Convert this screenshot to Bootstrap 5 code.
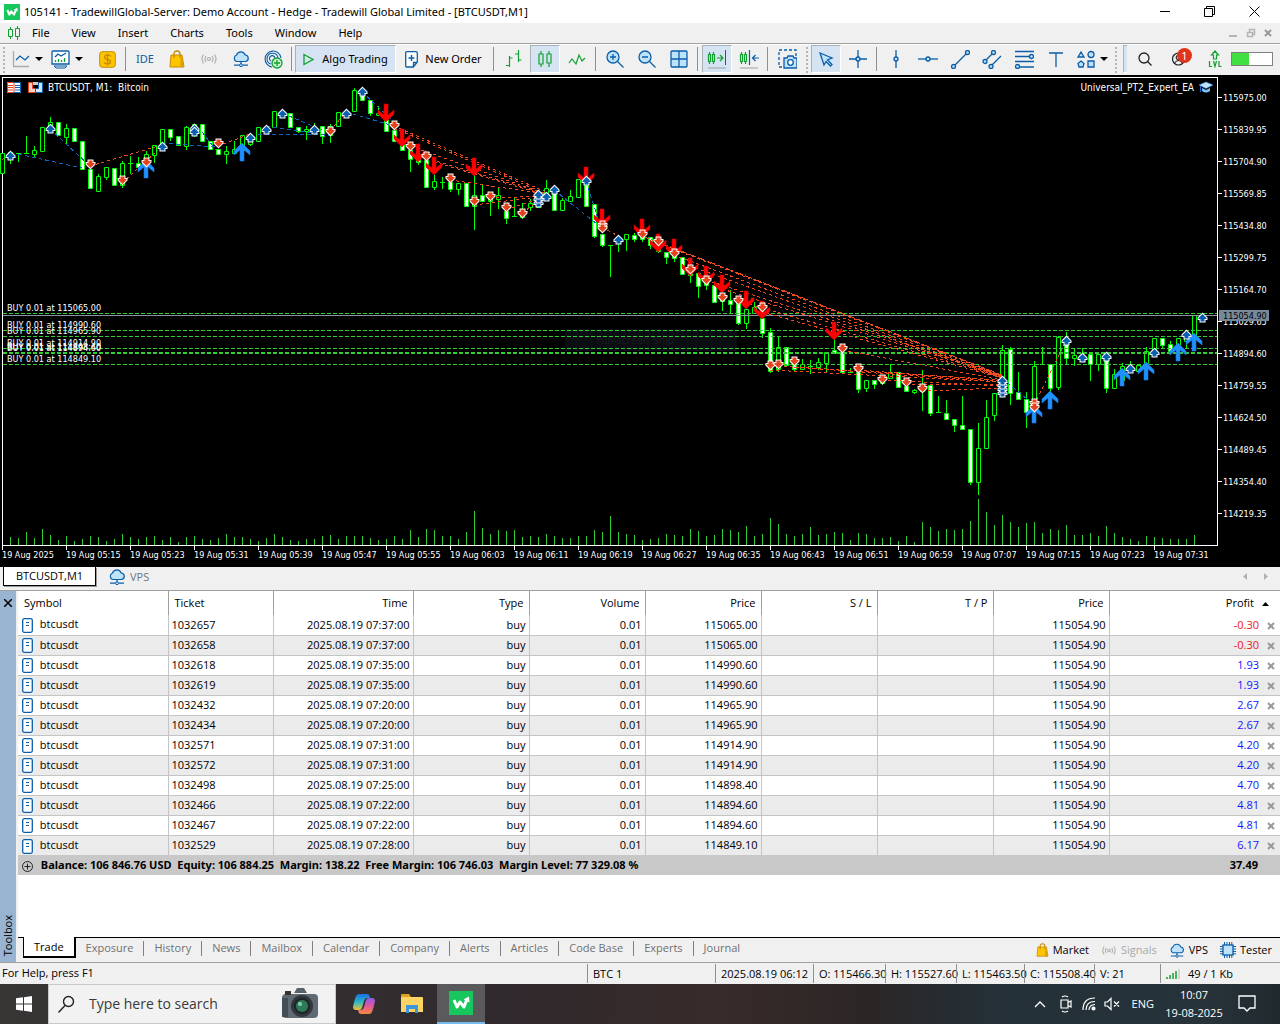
<!DOCTYPE html>
<html lang="en">
<head>
<meta charset="utf-8">
<meta name="viewport" content="width=device-width, initial-scale=1">
<title>105141 - TradewillGlobal-Server: Demo Account</title>
<link href="https://cdn.jsdelivr.net/npm/bootstrap@5.3.0/dist/css/bootstrap.min.css" rel="stylesheet">
<style>
:root{--ui:"Open Sans","Noto Sans",sans-serif;--edge:#a0a0a0;--face:#f0f0f0;--ink:#0a5ea8}
body{font-family:var(--ui);font-size:11px;line-height:16px;color:#000;background:#f0f0f0;min-height:100vh}
button,input{font:inherit;color:inherit}
button{border:0;background:none;padding:0}
a{color:inherit;text-decoration:none}
svg{display:block;flex:none}
.ico{fill:none;stroke:var(--ink);stroke-width:1.3}
.titlebar{height:23px;background:#fff;font-family:"Noto Sans",sans-serif}
.winbtn{width:45px;height:23px;display:flex;justify-content:center;align-items:center}
.winbtn:last-child{margin-right:3px}
.menubar{height:21px;background:var(--face);border-bottom:1px solid var(--edge);font-family:"Noto Sans",sans-serif}
.menubar a{padding:0 11px}
.toolbar{height:31px;background:var(--face);border-top:1px solid #fff;padding-bottom:2px;font-family:"Noto Sans",sans-serif}
.tb{width:32px;display:flex;align-items:center;justify-content:center;flex:none}
.tb-on{background:#d5e3f2;border:1px solid #a8b0b8;border-right-color:#fff;border-bottom-color:#fff}
.narrow{margin:0 1px;width:30px}
.drop{width:40px;gap:5px}
.tb-ide{color:var(--ink)}
.tsep{width:6px;flex:none;background:linear-gradient(#909090,#909090) 2px 2px/1px 24px no-repeat}
.grip{width:7px;flex:none;background:linear-gradient(#f0f0f0 50%,transparent 50%) 0 0/7px 4px,linear-gradient(#b4b4b4,#b4b4b4) 3px 0/2px 100% no-repeat}
.caret{width:0;height:0;border:4px solid transparent;border-top-color:#000;border-bottom:0}
.lvlbar{width:42px;height:14px;border:1px solid #808080;background:linear-gradient(90deg,#40e040 42%,#fff 42%);margin-right:7px}
.note-badge{position:absolute;left:14px;top:-4px;width:15px;height:15px;border-radius:50%;background:#e2331b;color:#fff;line-height:15px;font-size:11px}
.chart{background:#000}
.chart svg{width:100%;height:auto}
.chart text{font-family:"DejaVu Sans Condensed","DejaVu Sans",sans-serif;font-size:9px;fill:#fff}
.chart text.cap{font-size:10px}
.chart-tabs{height:24px;border-bottom:1px solid var(--edge)}
.chart-tabs a{height:19px}
.chart-tab{width:93px;background:#fff;border:1px solid #000;border-top:0;margin-left:3px;display:flex;align-items:center;justify-content:center;box-shadow:1px 1px 0 #999}
.toolbox{flex:1 0 auto}
.spine{width:16px;background:#99b4d1}
.spine span{writing-mode:vertical-rl;transform:rotate(180deg);margin-bottom:6px}
.pane{border-left:2px solid var(--face)}
.deals{width:100%;table-layout:fixed;border-collapse:collapse;background:#fff}
.deals th{font-weight:400;height:24px;padding:0 5px;border-right:1px solid var(--edge);text-align:right}
.deals td{height:20px;padding:0 3px;border-right:1px solid #c4c4c4;border-bottom:1px solid #c4c4c4;text-align:right;line-height:16px;white-space:nowrap}
.deals .lft{text-align:left}
.deals th.lft{padding-left:6px}
.deals tbody tr:nth-child(even){background:#ebebeb}
.deals tbody tr:last-child td{border-bottom:0}
.deals th:last-child,.deals td:last-child{border-right:0}
.deals td:last-child{padding-right:5px}
.deals th:last-child{padding-right:7px}
.deals tfoot td{background:#c8c8c8;border:0;font-weight:700;font-family:"Noto Sans",sans-serif}
.deals tfoot td:last-child{padding-right:22px}
.gain{color:#1414ff}.loss{color:#f01414}
.del{display:inline-block;vertical-align:middle;margin-left:8px}
.box-tabs{height:25px;border-top:1px solid #000;background:var(--face)}
.box-tabs a{color:#707070;padding:0 10px;height:15px;margin-top:3px;line-height:13px}
.box-tabs a+a+a{border-left:1px solid #808080}
.box-tabs a.now{background:#fff;color:#000;border:solid #000;border-width:0 2px 2px 1px;margin:-1px 0 0 5px;height:21px;line-height:20px}
.tools{column-gap:12px}
.statusbar{height:22px;border-top:1px solid var(--edge);background:var(--face)}
.statusbar div{border-left:1px solid #909090;padding-left:5px;line-height:19px;margin:1px 0;white-space:nowrap;flex:none}
.taskbar{height:40px;background:linear-gradient(90deg,#373635,#30292d 40%,#382b29 56%,#2b2626 68%,#243038 78%,#27333a 94%,#20292e);color:#fff}
.task{width:48px;height:40px;display:flex;align-items:center;justify-content:center}
.task-on{background:#5a5a5c;border-bottom:2px solid #76b9ed;margin-left:1px}
.finder{width:288px;height:40px;background:#f2f2f2;border:1px solid #c8c8c8;color:#303030}
.finder input{border:0;outline:0;background:none;font-size:14px;min-width:0;flex:1}
.finder input::placeholder{color:#3a3a3a;opacity:1}
.clock{width:72px;text-align:center;line-height:18px}
</style>
<script src="https://cdn.jsdelivr.net/npm/bootstrap@5.3.0/dist/js/bootstrap.bundle.min.js"></script>
</head>
<body class="d-flex flex-column">
<svg width="0" height="0" class="position-absolute" aria-hidden="true">
<symbol id="logo" viewBox="0 0 24 24"><path d="M0 0h24v24H0z" fill="#17c75d"/><path d="M5 9l3 7 3-5 4 5 3-8" fill="none" stroke="#fff" stroke-width="3" stroke-linejoin="round"/><path d="M14.500 8.500L20 5.500l.5 6z" fill="#fff"/></symbol>
<symbol id="bag" viewBox="0 0 16 18"><path d="M2 5h11l2 12H1z" fill="#fdc500" stroke="#c98a00"/><path d="M5 8V4q0-3 3-3t3 3v4" fill="none" stroke="#c98a00" stroke-width="1.300"/><path d="M12 5l3 12-4 0z" fill="#e0a000"/></symbol>
<symbol id="waves" viewBox="0 0 18 12"><g fill="none" stroke="#b0b0b0" stroke-width="1.200"><circle cx="9" cy="6" r="1.500"/><path d="M6 3q-2 3 0 6M12 3q2 3 0 6M3.500 1.500q-3 4.500 0 9M14.500 1.500q3 4.500 0 9"/></g></symbol>
<symbol id="cloud" viewBox="0 0 18 16"><path d="M4.500 10.500a3.500 3.500 0 0 1 0-6.500 4.600 4.600 0 0 1 8.700 0 3.300 3.300 0 0 1 .5 6.500z" fill="#bfe2fb" stroke="#0a5ea8" stroke-width="1.200"/><path d="M9 10.500V14M2 14.200h5M11 14.200h5" stroke="#0a5ea8" stroke-width="1.200"/><circle cx="9" cy="14.200" r="1.500" fill="#bfe2fb" stroke="#0a5ea8"/></symbol>
<symbol id="doc" viewBox="0 0 11 15"><rect x=".7" y=".7" width="9.600" height="13.600" rx="1.500" fill="#fff" stroke="#0a5ea8" stroke-width="1.300"/><path d="M4 4.500h3M4 7.500h3" stroke="#0a5ea8"/></symbol>
<symbol id="cross" viewBox="0 0 8 8"><path d="M1 1l6 6M7 1L1 7" stroke="#999" stroke-width="2"/></symbol>
</svg>

<header class="titlebar d-flex align-items-center">
<svg width="16" height="16" class="ms-1 me-1 ps-0"><use href="#logo"/></svg>
<span class="flex-grow-1 text-nowrap">105141 - TradewillGlobal-Server: Demo Account - Hedge - Tradewill Global Limited - [BTCUSDT,M1]</span>
<button class="winbtn" aria-label="Minimize"><svg width="10" height="10"><path d="M0 4.500h10" stroke="#000"/></svg></button>
<button class="winbtn" aria-label="Restore"><svg width="11" height="11" fill="none" stroke="#000"><path d="M.5 2.500h8v8h-8zM2.500 2.500v-2h8v8h-2"/></svg></button>
<button class="winbtn" aria-label="Close"><svg width="11" height="11" stroke="#000"><path d="M.5.5l10 10M10.500.5l-10 10"/></svg></button>
</header>

<nav class="menubar d-flex align-items-center">
<svg width="13" height="14" class="ms-2 me-0" fill="none" stroke="#10a030"><path d="M.5 3.500h4v7h-4zM2.500 1v2.500M2.500 10.500V13M7.500 2.500h4v8h-4zM9.500 0v2.500M9.500 10.500V14"/></svg>
<a href="#">File</a><a href="#">View</a><a href="#">Insert</a><a href="#">Charts</a><a href="#">Tools</a><a href="#">Window</a><a href="#">Help</a>
<div class="ms-auto d-flex gap-2 pe-2 align-items-center">
<svg width="10" height="10"><path d="M1 8h8" stroke="#b4b4b4" stroke-width="2"/></svg>
<svg width="10" height="10" fill="none" stroke="#b4b4b4"><path d="M1.500 4.500h5v4h-5zM3.500 4V1.500h5v5H7" stroke-width="1.500"/></svg>
<svg width="8" height="8"><use href="#cross"/></svg>
</div>
</nav>

<div class="toolbar d-flex align-items-stretch">
<i class="grip"></i>
<button class="tb drop" aria-label="Chart type"><svg class="ico" width="18" height="18"><path d="M1.500 1v15.500H17" stroke="#aaa"/><path d="M4 10l4-4 5 4 4-4" /></svg><i class="caret"></i></button>
<button class="tb drop" aria-label="Indicators"><svg class="ico" width="19" height="19"><path d="M2 1h15q1 0 1 1v12H1V2q0-1 1-1z" fill="#fff"/><path d="M3 16h13l-2 2H5z" stroke-width="1"/><path d="M4 7l3-3 3 2 5-3"/><path d="M4.500 12v-2M7.500 12V9M10.500 12v-2M13.500 12V8" stroke="#10a030"/></svg><i class="caret"></i></button>
<button class="tb ms-1" aria-label="Finance"><svg width="17" height="17"><rect x=".7" y=".7" width="15.600" height="15.600" rx="2.500" fill="#fdc500" stroke="#c98a00"/><path d="M12 5.500q-1-1.500-3.500-1.500T5.500 6q0 2 3 2.500t3 2.500q0 2-3 2t-3.700-1.700M8.500 2.500v12" fill="none" stroke="#c98a00" stroke-width="1.300"/></svg></button>
<i class="tsep"></i>
<button class="tb tb-ide">IDE</button>
<button class="tb" aria-label="Market"><svg width="16" height="18"><use href="#bag"/></svg></button>
<button class="tb" aria-label="Signals"><svg width="18" height="12"><use href="#waves"/></svg></button>
<button class="tb" aria-label="VPS"><svg width="18" height="16"><use href="#cloud"/></svg></button>
<button class="tb" aria-label="Target"><svg class="ico" width="19" height="19"><path d="M8 17A8 8 0 1 1 17 8M7 14A5.500 5.500 0 1 1 14 8M7 11a2.800 2.800 0 1 1 4-3" stroke-width="1.100"/><circle cx="13" cy="13" r="5" fill="#c9f0cf" stroke="#10a030"/><path d="M13 10v6M10 13h6" stroke="#10a030"/></svg></button>
<i class="tsep"></i>
<button class="tb tb-on" style="width:101px;gap:8px"><svg width="11" height="13"><path d="M1 1.500l9 5-9 5z" fill="none" stroke="#10a030" stroke-width="1.300"/></svg>Algo Trading</button>
<button class="tb" style="width:95px;gap:7px"><svg class="ico" width="13" height="17"><path d="M2 .7h9q1.300 0 1.300 1.300v9l-4 5H2q-1.300 0-1.300-1.300V2Q.7.700 2 .7zM8.500 16v-4.500h4" fill="#fff"/><path d="M6.500 4v6M3.500 7h6" stroke-width="1.500"/></svg>New Order</button>
<i class="tsep"></i>
<button class="tb" aria-label="Bars"><svg width="17" height="18" fill="none" stroke="#10a030" stroke-width="1.200"><path d="M4.500 6v11M4.500 8h3M1 15.500h3.500M13.500 0v12M10 4h3.500M13.500 10h3"/></svg></button>
<button class="tb tb-on narrow" aria-label="Candles"><svg width="14" height="18" fill="none" stroke="#10a030" stroke-width="1.200"><path d="M1 4h4v10H1zM3 1v3M3 14v3M9 4h4v9H9zM11 1v3M11 13v4"/></svg></button>
<button class="tb" aria-label="Line"><svg width="18" height="14" fill="none" stroke="#10a030" stroke-width="1.200"><path d="M1 11l3-4 4 5 3-9 3 6 3-3"/></svg></button>
<i class="tsep"></i>
<button class="tb" aria-label="Zoom in"><svg class="ico" width="18" height="18"><circle cx="7" cy="7" r="6" fill="#bfe2fb"/><path d="M11.500 11.500l6 6M7 4v6M4 7h6"/></svg></button>
<button class="tb" aria-label="Zoom out"><svg class="ico" width="18" height="18"><circle cx="7" cy="7" r="6" fill="#bfe2fb"/><path d="M11.500 11.500l6 6M4 7h6"/></svg></button>
<button class="tb" aria-label="Tile"><svg class="ico" width="18" height="18"><rect x="1" y="1" width="16" height="16" rx="1" fill="#bfe2fb"/><path d="M9 1v16M1 9h16"/></svg></button>
<i class="tsep"></i>
<button class="tb tb-on narrow" aria-label="Auto scroll"><svg width="20" height="19" fill="none" stroke="#10a030"><path d="M1.500 4.500h2v7h-2zM2.500 2v2.500M2.500 11.500V14M5.500 4.500h2v7h-2zM6.500 2v2.500M6.500 11.500V14M10 8h6M13 5l3 3-3 3" stroke-width="1.200"/><path d="M18.500 0v15" stroke="#0a5ea8"/><path d="M1 18h18" stroke="#a0a0a0"/></svg></button>
<button class="tb" aria-label="Chart shift"><svg width="20" height="19" fill="none" stroke="#10a030"><path d="M1.500 4.500h2v7h-2zM2.500 2v2.500M2.500 11.500V14M5.500 4.500h2v7h-2zM6.500 2v2.500M6.500 11.500V14" stroke-width="1.200"/><path d="M10.500 0v15M20 8h-6M16.500 5l-3 3 3 3" stroke="#0a5ea8" stroke-width="1.200"/><path d="M1 18h18" stroke="#a0a0a0"/></svg></button>
<i class="tsep"></i>
<button class="tb" aria-label="Screenshot"><svg class="ico" width="19" height="20"><path d="M4 18H1V1h17v6" stroke-dasharray="3 2"/><path d="M6 9h3l1-2h5l1 2h3v10H6z" fill="#bfe2fb"/><circle cx="12.500" cy="13.500" r="2.800" fill="#fff"/></svg></button>
<i class="grip"></i>
<button class="tb tb-on narrow" aria-label="Cursor"><svg class="ico" width="15" height="15"><path d="M1 1l12 5-4.500 2L13 12.500 11.500 14 7 9.500 5 13z" fill="#bfe2fb"/></svg></button>
<button class="tb" aria-label="Crosshair"><svg class="ico" width="18" height="18"><path d="M9 0v18M0 9h18"/><circle cx="9" cy="9" r="2" fill="#bfe2fb"/></svg></button>
<i class="tsep"></i>
<button class="tb" aria-label="Vertical line"><svg class="ico" width="18" height="18"><path d="M9 0v18"/><circle cx="9" cy="9" r="2" fill="#bfe2fb"/></svg></button>
<button class="tb" aria-label="Horizontal line"><svg class="ico" width="20" height="18"><path d="M0 9h20"/><circle cx="10" cy="9" r="2" fill="#bfe2fb"/></svg></button>
<button class="tb" aria-label="Trendline"><svg class="ico" width="19" height="19"><path d="M2 17L17 2"/><g fill="#bfe2fb"><circle cx="2.500" cy="16.500" r="2"/><circle cx="16.500" cy="2.500" r="2"/></g></svg></button>
<button class="tb" aria-label="Channel"><svg class="ico" width="20" height="19"><path d="M3 11l8-8M8 17L19 6"/><g fill="#bfe2fb"><circle cx="3" cy="11.500" r="2"/><circle cx="11.500" cy="2.500" r="2"/><circle cx="9" cy="16.500" r="2"/></g></svg></button>
<button class="tb" aria-label="Fibonacci"><svg class="ico" width="19" height="19"><path d="M0 1.500h19M0 6.500h19M0 11.500h19M0 17h19"/><g fill="#bfe2fb"><circle cx="16.500" cy="6.500" r="2"/><circle cx="2.500" cy="16.500" r="2"/></g></svg></button>
<button class="tb" aria-label="Text"><svg class="ico" width="14" height="15"><path d="M0 1h14M7 1v14"/></svg></button>
<button class="tb drop" aria-label="Shapes"><svg class="ico" width="18" height="18"><g fill="#bfe2fb"><path d="M4 2L1 7h6zM4 11l3 2.500-1 3.500H2l-1-3.500zM11 11h6v6h-6z"/><circle cx="14" cy="4.500" r="3"/></g></svg><i class="caret"></i></button>
<i class="grip"></i>
<i class="tb-on ms-1 border-end-0" style="width:8px"></i>
<div class="d-flex ms-auto align-items-center">
<button class="tb ps-1" aria-label="Search"><svg width="14" height="14" fill="none" stroke="#222" stroke-width="1.300"><circle cx="6" cy="6" r="5"/><path d="M9.500 9.500l4 4"/></svg></button>
<button class="tb position-relative ms-1" aria-label="Account"><svg width="14" height="14" fill="none" stroke="#222" stroke-width="1.200"><circle cx="6.500" cy="7" r="6"/><circle cx="6.500" cy="5.500" r="2.300"/><path d="M2.500 11q4-5 8 0"/></svg><span class="note-badge">1</span></button>
<button class="tb ms-1" aria-label="Level"><svg width="14" height="18" fill="none" stroke="#10a030" stroke-width="1.200"><path d="M7 1L3.500 5H5.500V9h3V5h2z"/><path d="M1.500 11v5.500h2.500M5.500 11l1.500 5.500L8.500 11M11 11v5.500h2.500"/></svg></button>
<div class="lvlbar"></div>
</div>
</div>

<main class="chart"><svg id="plot" viewBox="0 75 1280 492" role="img" aria-label="BTCUSDT one minute candles"></svg></main>

<div class="chart-tabs d-flex">
<a href="#" class="chart-tab">BTCUSDT,M1</a>
<a href="#" class="d-flex align-items-center ms-2 ps-1 gap-1 text-secondary"><svg width="18" height="16"><use href="#cloud"/></svg>VPS</a>
<svg class="ms-auto me-2 mt-1" width="32" height="12"><path d="M7 2v7L3 5.500zM24 2v7l4-3.500z" fill="#b0b0b0"/></svg>
</div>

<section class="toolbox d-flex">
<div class="spine d-flex flex-column align-items-center justify-content-between">
<button aria-label="Close toolbox"><svg class="mt-2" width="8" height="8" stroke="#000" stroke-width="1.500"><path d="M0 0l8 8M8 0L0 8"/></svg></button>
<span>Toolbox</span>
</div>
<div class="pane flex-grow-1 d-flex flex-column bg-white">
<table class="deals">
<colgroup><col style="width:150px"><col style="width:105px"><col style="width:140px"><col style="width:116px"><col style="width:116px"><col style="width:116px"><col style="width:116px"><col style="width:116px"><col style="width:116px"><col></colgroup>
<thead><tr><th class="lft">Symbol</th><th class="lft">Ticket</th><th>Time</th><th>Type</th><th>Volume</th><th>Price</th><th>S / L</th><th>T / P</th><th>Price</th><th><span class="me-2">Profit</span><svg class="d-inline-block align-middle me-1" width="7" height="4"><path d="M0 4l3.500-4L7 4z"/></svg></th></tr></thead>
<tbody id="rows"></tbody>
<tfoot><tr><td class="lft" colspan="9"><svg class="d-inline-block align-middle me-1" width="13" height="13" fill="none" stroke="#222"><circle cx="6.500" cy="6.500" r="5"/><path d="M6.500 3.500v6M3.500 6.500h6"/></svg> Balance: 106 846.76 USD&nbsp; Equity: 106 884.25&nbsp; Margin: 138.22&nbsp; Free Margin: 106 746.03&nbsp; Margin Level: 77 329.08 %</td><td>37.49</td></tr></tfoot>
</table>
<div class="box-tabs d-flex mt-auto">
<a href="#" class="now">Trade</a><a href="#">Exposure</a><a href="#">History</a><a href="#">News</a><a href="#">Mailbox</a><a href="#">Calendar</a><a href="#">Company</a><a href="#">Alerts</a><a href="#">Articles</a><a href="#">Code Base</a><a href="#">Experts</a><a href="#">Journal</a>
<div class="tools ms-auto d-flex align-items-center pe-2">
<button class="d-flex align-items-center gap-1"><svg width="13" height="14"><use href="#bag"/></svg>Market</button>
<button class="d-flex align-items-center gap-1" style="color:#a8a8a8"><svg width="16" height="11"><use href="#waves"/></svg>Signals</button>
<button class="d-flex align-items-center gap-1"><svg width="16" height="15"><use href="#cloud"/></svg>VPS</button>
<button class="d-flex align-items-center gap-1"><svg class="ico" width="16" height="16"><path d="M4.500 0v16M7 0v16M9.500 0v16M11.800 0v16M0 4.500h16M0 7h16M0 9.500h16M0 11.800h16" stroke-width="1"/><rect x="3" y="3" width="10" height="10" fill="#bfe2fb"/></svg>Tester</button>
</div>
</div>
</div>
</section>

<footer class="statusbar d-flex">
<span class="flex-grow-1" style="padding:2px">For Help, press F1</span>
<div style="width:128px">BTC 1</div><div style="width:98px">2025.08.19 06:12</div><div style="width:72px">O: 115466.30</div><div style="width:71px">H: 115527.60</div><div style="width:68px">L: 115463.50</div><div style="width:70px">C: 115508.40</div><div style="width:66px">V: 21</div>
<div class="d-flex align-items-center gap-2" style="width:120px"><svg width="14" height="11" stroke="#10a030" stroke-width="1.500"><path d="M1 11V9M4 11V7M7 11V5M10 11V3"/><path d="M13 11V1" stroke="#ccc"/></svg>49 / 1 Kb</div>
</footer>

<footer class="taskbar d-flex align-items-center">
<button class="task" aria-label="Start"><svg width="16" height="16" fill="#fff"><path d="M0 2.200L7 1.300V7.500H0zM8 1.200L16 0V7.500H8zM0 8.500H7V14.700L0 13.800zM8 8.500h8V16L8 14.800z"/></svg></button>
<label class="finder d-flex align-items-center ps-2 gap-2">
<svg width="20" height="20" fill="none" stroke="#222" stroke-width="1.400"><circle cx="11.500" cy="7.500" r="5"/><path d="M8 11.500l-6.500 7"/></svg>
<input type="text" placeholder="Type here to search" aria-label="Search" class="ps-1">
<svg width="38" height="34" class="me-3"><path d="M13 6l3-5h7l3 5z" fill="#59636b"/><rect x="1" y="7" width="36" height="24" rx="4" fill="#606a72"/><rect x="1" y="11" width="6" height="19" fill="#454d54"/><rect x="4" y="4" width="6" height="4" fill="#333"/><circle cx="21" cy="19" r="11" fill="#30373d"/><circle cx="21" cy="19" r="8" fill="#1e2428"/><circle cx="21" cy="19" r="6" fill="#2f7a58"/><circle cx="19" cy="17" r="2" fill="#7fd0a4"/></svg>
</label>
<button class="task ms-1" aria-label="Copilot"><svg width="24" height="24"><defs><linearGradient id="g1" x2="0" y2="1"><stop stop-color="#1b6fe0"/><stop offset=".5" stop-color="#2bb6c8"/><stop offset="1" stop-color="#f2c530"/></linearGradient><linearGradient id="g2" x2="0" y2="1"><stop stop-color="#8a5be8"/><stop offset=".5" stop-color="#e2559c"/><stop offset="1" stop-color="#f58a3c"/></linearGradient></defs><path d="M7 2h8q2 0 2.500 2l.5 2h-3q-2 0-3 3l-2 7q-1 2-3 2H4q-3 0-3-3 1-6 3-11 1-2 3-2z" fill="url(#g1)"/><path d="M17 22H9q-2 0-2.500-2L6 18h3q2 0 3-3l2-7q1-2 3-2h3q3 0 3 3-1 6-3 11-1 2-3 2z" fill="url(#g2)"/></svg></button>
<button class="task" aria-label="File Explorer"><svg width="24" height="22"><path d="M1 2q0-1 1-1h7l2 3H1z" fill="#e0a21c"/><path d="M1 4h21q1 0 1 1v14H1z" fill="#fcd462"/><path d="M6 20v-8h12v8h-3v-4H9v4z" fill="#3d96dd"/></svg></button>
<button class="task task-on" aria-label="Terminal"><svg width="24" height="24"><use href="#logo"/></svg></button>
<div class="ms-auto d-flex align-items-center">
<svg class="me-2" width="12" height="8" fill="none" stroke="#fff" stroke-width="1.300"><path d="M1 7l5-5 5 5"/></svg>
<svg class="ms-1 me-2" width="16" height="18" fill="none" stroke="#fff" stroke-width="1.200"><path d="M3 5h7v8H3zM10 7.500l3-1.500v6l-3-1.500M4 2q3-2 6 0M4 16q3 2 6 0"/></svg>
<svg class="me-2" width="14" height="14" fill="none" stroke="#fff" stroke-width="1.200"><path d="M1 13Q1 1 13 1M4 13q0-8.500 9-8.500M7 13q0-5 6-5.500"/><circle cx="11.500" cy="11.500" r="1.500" fill="#fff"/></svg>
<svg class="me-2" width="16" height="14" fill="none" stroke="#fff" stroke-width="1.200"><path d="M1 5h2.500L7 1.500v11L3.500 9H1zM10 4.500l5 5M15 4.500l-5 5"/></svg>
<span class="ms-1 me-1">ENG</span>
<div class="clock">10:07<br>19-08-2025</div>
<svg class="ms-2" width="18" height="18" fill="none" stroke="#fff" stroke-width="1.300"><path d="M1 1h16v12h-5l-3 3-3-3H1z"/></svg>
<span style="width:24px"></span>
</div>
</footer>

<script>
// Open positions: ticket, time, open price, profit
const deals = [
 [1032657,"07:37","115065.00","-0.30"],[1032658,"07:37","115065.00","-0.30"],[1032618,"07:35","114990.60","1.93"],
 [1032619,"07:35","114990.60","1.93"],[1032432,"07:20","114965.90","2.67"],[1032434,"07:20","114965.90","2.67"],
 [1032571,"07:31","114914.90","4.20"],[1032572,"07:31","114914.90","4.20"],[1032498,"07:25","114898.40","4.70"],
 [1032466,"07:22","114894.60","4.81"],[1032467,"07:22","114894.60","4.81"],[1032529,"07:28","114849.10","6.17"]];
document.getElementById("rows").innerHTML = deals.map(([id,t,p,g]) => `<tr><td class="lft ps-1"><svg class="d-inline-block align-middle me-1" width="11" height="15"><use href="#doc"/></svg> btcusdt</td><td class="lft">${id}</td><td>2025.08.19 ${t}:00</td><td>buy</td><td>0.01</td><td>${p}</td><td></td><td></td><td>115054.90</td><td class="${g<0?"loss":"gain"}">${g}<button class="del" aria-label="Close position"><svg width="8" height="8"><use href="#cross"/></svg></button></td></tr>`).join("");

// Candles every 8 units: high, body top, body bottom, low, filled
const bars = `153 153 173 173 0|152 152 155 163 0|153 153 154 161 0|136 153 154 154 0|146 150 154 157 0|127 127 151 151 0|117 122 132 132 0|122 122 135 135 1|124 128 137 143 0|128 128 141 141 1|141 141 169 169 1|169 169 188 188 1|174 176 191 191 0|167 167 177 179 0|168 168 185 185 1|161 163 185 187 0|156 163 164 173 0|157 163 167 167 1|151 154 163 165 0|145 145 155 162 0|129 129 144 144 0|129 129 137 140 1|136 136 145 145 1|126 127 146 149 0|124 124 131 136 0|124 124 141 141 1|141 141 149 149 1|149 149 154 154 1|146 151 154 163 0|141 149 153 153 0|135 135 150 150 0|139 139 144 145 0|127 127 141 141 0|127 127 130 130 0|111 111 127 127 0|112 112 116 116 0|113 113 127 127 1|127 127 131 132 1|126 129 131 139 0|123 127 133 133 0|126 126 136 143 1|124 126 135 142 0|112 112 126 126 0|112 112 116 116 0|88 90 111 111 0|94 94 100 100 1|100 100 113 115 1|106 113 115 115 0|119 119 131 131 1|130 130 141 141 1|141 141 150 150 1|150 150 159 171 1|158 158 162 164 1|160 160 187 187 1|175 181 187 189 0|177 182 183 188 0|182 182 189 191 1|183 183 189 194 0|183 183 206 206 1|173 195 206 229 0|185 195 201 201 1|194 194 201 215 0|187 195 199 208 0|211 211 218 223 1|197 216 217 217 0|203 209 217 218 0|199 203 207 210 0|193 193 207 207 0|180 188 193 193 0|191 191 210 210 1|198 200 210 210 0|190 196 201 201 0|179 179 197 197 0|185 185 206 206 1|204 204 236 237 1|234 234 245 246 1|245 245 246 276 0|240 240 243 251 0|234 234 239 250 0|233 235 239 241 1|236 236 239 241 1|237 237 245 248 1|246 246 251 252 1|252 252 257 263 1|253 253 258 261 1|257 257 274 274 1|270 270 275 282 1|273 273 286 297 1|281 281 285 289 1|285 285 302 302 1|298 298 301 310 1|290 300 304 312 1|303 303 323 324 1|309 309 323 328 0|302 307 313 313 0|318 318 333 337 1|328 332 371 372 1|337 347 369 371 0|347 347 365 365 1|365 365 369 370 1|359 364 369 369 0|360 366 367 373 0|358 362 367 369 0|352 352 363 371 0|339 350 353 353 1|352 352 372 372 1|368 372 373 373 0|372 372 389 392 1|380 380 388 391 0|380 380 384 388 1|376 378 383 384 0|364 372 378 378 0|372 372 387 387 1|386 386 391 391 1|389 390 392 393 0|370 385 391 410 1|385 385 413 415 1|396 412 413 413 0|400 413 419 419 1|419 419 425 431 1|396 425 429 429 1|429 429 482 484 1|423 448 482 494 0|400 417 448 448 0|393 393 415 420 0|345 350 379 379 0|347 349 393 404 1|372 392 399 399 1|392 399 412 427 1|361 366 400 400 0|347 364 365 365 0|364 364 388 391 1|336 337 387 389 0|332 340 358 364 1|349 355 358 365 0|348 355 361 361 0|354 354 364 380 1|354 354 364 370 0|353 360 388 392 1|369 374 388 388 0|363 366 380 380 0|361 366 371 371 0|365 365 371 371 0|347 351 363 365 0|338 338 350 350 0|338 338 345 347 1|341 344 351 351 1|338 338 345 345 0|332 337 341 348 0|315 315 335 335 0`.split("|").map(s=>s.split(" ").map(Number));
const vol = [0,8,7,13,7,16,10,5,9,4,6,9,8,4,6,11,8,6,8,9,5,8,3,8,9,6,5,7,11,8,8,6,4,7,11,8,5,4,6,6,9,10,6,9,9,9,7,5,6,9,6,15,8,16,15,9,9,6,13,34,17,11,15,14,15,8,9,8,11,9,7,7,9,9,15,13,29,13,11,10,5,6,7,11,10,9,16,14,9,10,16,15,13,19,9,11,27,21,11,9,11,18,10,11,13,12,5,12,11,7,7,8,4,9,3,23,18,14,16,15,16,24,46,33,20,30,23,18,22,23,12,16,15,20,10,10,12,9,19,12,8,6,4,9,8,7,6,6,6,10];
let out = "";
const seg = (a,b,c,d,col,dash="") => `<path d="M${a} ${b}L${c} ${d}" stroke="${col}" ${dash&&`stroke-dasharray="${dash}"`} fill="none" shape-rendering="crispEdges"/>`;
const txt = (x,y,s,o="") => `<text x="${x}" y="${y}" ${o}>${s}</text>`;
out += `<rect x="565" y="329" width="172" height="22" fill="#0a0d12"/>` + txt(596,344,"Full-screen Snip",'style="fill:#1a1c22;font-size:11px"');
// frame, scales
out += `<path d="M1217.500 77.500H2.500M2.500 77V549M2 545.500H1218M1217.500 77V546" stroke="#fff" fill="none"/>`;
["2025","05:15","05:23","05:31","05:39","05:47","05:55","06:03","06:11","06:19","06:27","06:35","06:43","06:51","06:59","07:07","07:15","07:23","07:31"].forEach((t,i)=>{const x=2+64*i;out+=seg(x+.5,546,x+.5,550,"#fff")+txt(x,558,"19 Aug "+t)});
["115975.00","115839.95","115704.90","115569.85","115434.80","115299.75","115164.70","115029.65","114894.60","114759.55","114624.50","114489.45","114354.40","114219.35"].forEach((t,i)=>{const y=97+32*i;out+=seg(1218,y+.5,1222,y+.5,"#fff")+txt(1223,y+4,t)});
vol.forEach((v,i)=>{if(v)out+=seg(2.500+8*i,545,2.500+8*i,545-v,"#32cd32")});
bars.forEach(([h,a,b,l,f],i)=>{const x=2.500+8*i;
 if(h<a)out+=seg(x,h,x,a,"#0f0"); if(l>b)out+=seg(x,b,x,l+1,"#0f0");
 out+= b-a<2?seg(x-2.500,a+.5,x+2.500,a+.5,"#0f0"):`<path d="M${x-2} ${a+.5}h4V${b+.5}h-4z" fill="${f?"#fff":"#000"}" stroke="#0f0"/>`});
[313,330,336,348,352,353,364].forEach(y=>out+=seg(3,y+.5,1217,y+.5,"#32cd32","4 2"));
out+=seg(3,315.5,1217,315.5,"#8a94a6");
// closed-trade connectors
const R="#f04a20",B="#0f66c0";
[[18,154,82,168],[50,129,90,166],[162,143,218,147],[202,132,216,150],[266,126,330,136],[258,134,330,134],[362,92,394,122],[346,112,394,126],[282,113,322,130],[554,190,602,228],[586,181,600,225],[1002,378,1034,405]].forEach(a=>out+=seg(...a,B,"4 3"));
[[2,160,10,153],[90,166,162,145],[122,183,158,150],[218,146,250,134],[330,131,346,112],[394,126,546,192],[394,128,546,194],[410,146,546,194],[426,158,546,194],[434,162,546,195],[450,180,546,194],[474,205,546,196],[490,198,546,196],[506,210,546,196],[522,213,546,196],[602,227,618,236],[770,370,1002,382],[778,366,1002,382],[794,367,1002,380],[842,350,1002,380],[858,370,1002,381],[882,380,1002,386],[906,384,1002,384],[922,391,1002,388],[1034,405,1066,341]].forEach(a=>out+=seg(...a,R,"3 3"));
[[642,236],[658,243],[674,255],[690,266],[706,280],[722,289],[738,301],[762,312]].forEach(([x,y],i)=>out+=seg(x,y,1002,375+i%4,R,i?"3 3":"8 2"));
// signal arrows
[[386,122],[402,147],[418,162],[434,175],[474,176],[586,185],[602,227],[642,237],[658,252],[674,257],[690,276],[706,284],[722,293],[746,309],[762,319],[834,340]].forEach(([x,y])=>out+=`<path transform="translate(${x} ${y})" d="M-2-18H2V-7L8-12V-8L0 0-8-8V-12L-2-7Z" fill="#f00" stroke="#c00" stroke-width=".6"/>`);
[[146,160],[242,143],[1034,405],[1050,391],[1122,368],[1146,362],[1178,343],[1194,333]].forEach(([x,y])=>out+=`<path transform="translate(${x} ${y})" d="M-2 18H2V7L8 12V8L0 0-8 8V12L-2 7Z" fill="#1e90ff" stroke="#1e78e0" stroke-width=".6"/>`);
// deal markers
[[10,156],[50,129],[162,147],[194,129],[194,132],[250,138],[266,130],[282,114],[314,130],[346,114],[362,92],[538,203],[538,199],[538,195],[546,197],[554,190],[586,181],[618,240],[1002,393],[1002,389],[1002,385],[1002,381],[1066,341],[1082,358],[1106,357],[1130,369],[1154,353],[1186,335],[1202,318]].forEach(([x,y])=>out+=`<path transform="translate(${x+.5} ${y})" d="M0-4L4 0V1H2V3.500H-2V1H-4V0Z" fill="#0b5fb0" stroke="#fff" stroke-width="2" paint-order="stroke"/>`);
[[90,164],[122,180],[146,162],[218,143],[330,131],[394,125],[410,146],[426,156],[450,178],[474,201],[490,196],[506,207],[522,213],[602,225],[602,228],[642,234],[658,241],[674,253],[690,269],[706,280],[722,297],[738,300],[762,307],[770,365],[778,364],[794,361],[842,348],[858,368],[882,379],[906,382],[922,388],[1034,403],[1034,407]].forEach(([x,y])=>out+=`<path transform="translate(${x+.5} ${y})" d="M0 4L4 0V-1H2V-3.500H-2V-1H-4V0Z" fill="#e8421c" stroke="#fff" stroke-width="2" paint-order="stroke"/>`);
[["115065.00",311],["114990.60",328],["114965.90",334],["114914.90",346],["114898.40",350],["114894.60",351],["114849.10",362]].forEach(([p,y])=>out+=txt(7,y,"BUY 0.01 at "+p));
out+=`<rect x="1219" y="310" width="50" height="11" fill="#778899"/>`+txt(1223,319,"115054.90",'style="fill:#000"');
out+=txt(48,91,"BTCUSDT, M1:&#160; Bitcoin",'class="cap"')+txt(1194,91,"Universal_PT2_Expert_EA",'class="cap" text-anchor="end"');
out+=`<path d="M7 82h14v11H7z" fill="#fff"/><path d="M7.500 82.500h6.500v10H7.500zM8 85.500h5M8 87.500h5M8 90h5" stroke="#e8421c" fill="none"/><path d="M21 82.500h-7M14 92.500h6.500v-10M15 85.500h5M15 87.500h5M15 90h5" stroke="#0b5fb0" fill="none"/><path d="M28.500 82.500h4v6h3v4h-7z" fill="#fbd0c8" stroke="#e8421c"/><path d="M42.500 82.500h-4v6h-3v4h7z" fill="#cfe6fa" stroke="#0b5fb0"/><path d="M33 82h5v3h-5z" fill="#ccc"/>`;
out+=`<path d="M1206 82l7 3-7 3.500-7-3.500z" fill="#bfe2fb" stroke="#1e90ff" stroke-width=".5"/><path d="M1202 88v3q4 3 8 0v-3l-4 2z" fill="#7cc0f5"/><path d="M1200.500 86v6" stroke="#1e70d0"/>`;
document.getElementById("plot").innerHTML = out;
</script>
</body>
</html>
